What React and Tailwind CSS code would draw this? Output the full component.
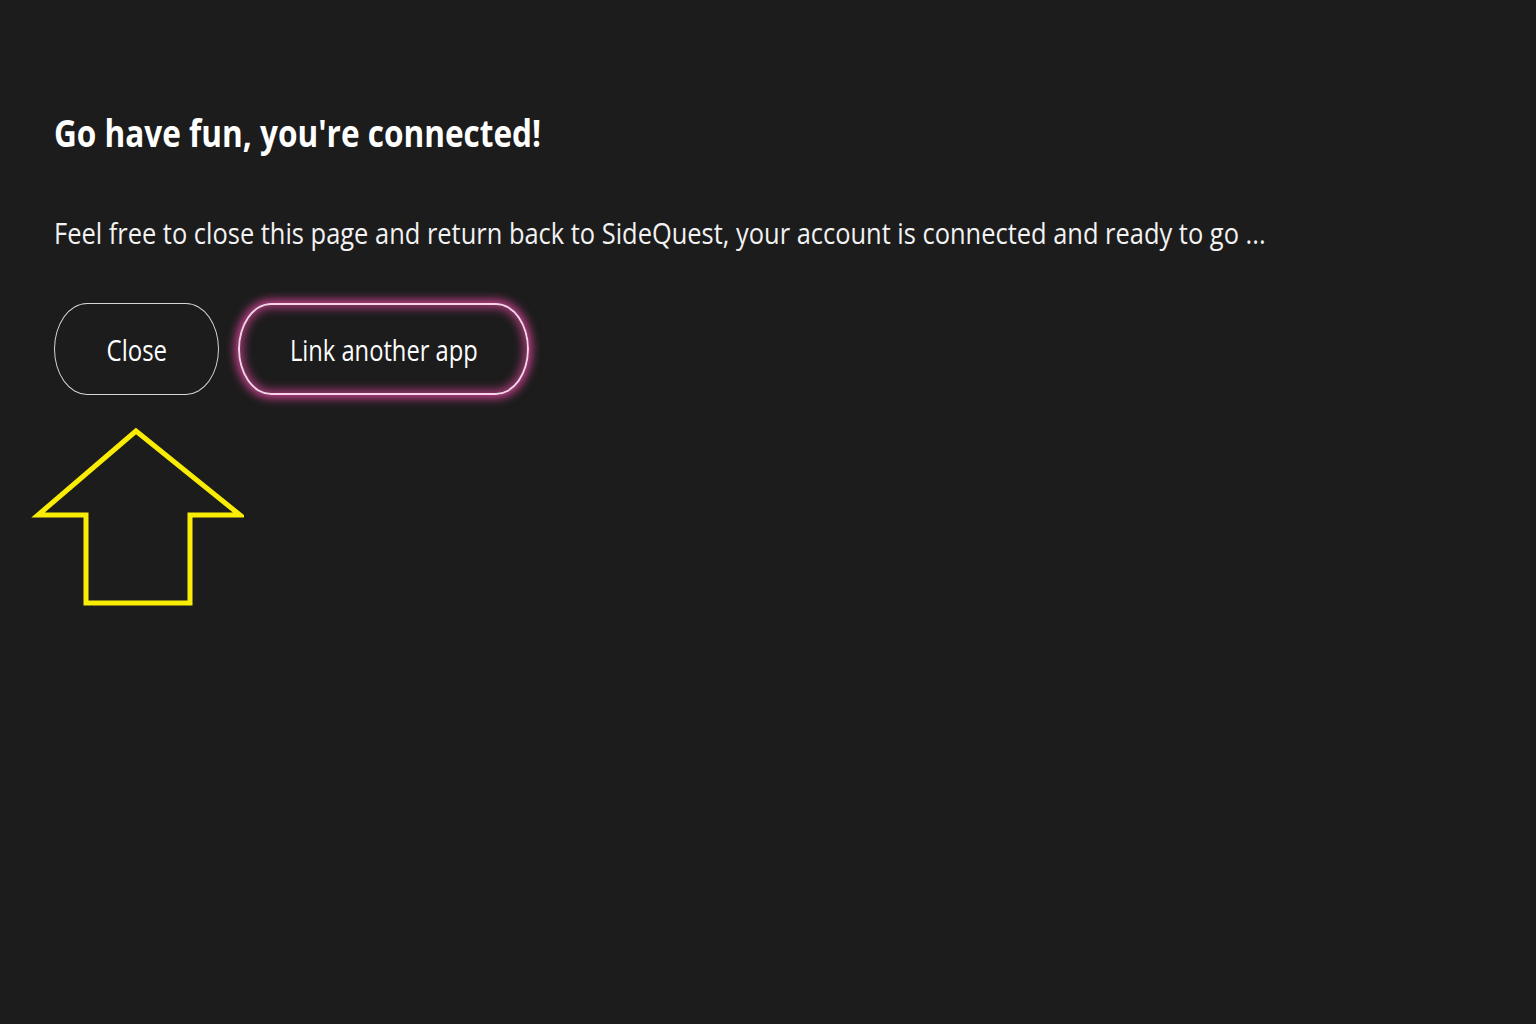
export default function App() {
  const font = { fontFamily: '"Open Sans", "Noto Sans", sans-serif' };
  return (
    <div className="min-h-[1024px] w-full bg-[#1c1c1c] text-white" style={font}>
      <div className="flex flex-col items-start pl-[54px] pt-[104px]">
        <h1 className="text-[38px] font-bold leading-[56px] whitespace-nowrap">
          <span className="inline-block origin-left scale-x-[0.83]">Go have fun, you're connected!</span>
        </h1>
        <p className="mt-[51px] text-[30px] leading-[44px] whitespace-nowrap text-[#f2f2f2]">
          <span className="inline-block origin-left scale-x-[0.848]">
            Feel free to close this page and return back to SideQuest, your account is connected and ready to go ...
          </span>
        </p>
        <div className="mt-[48px] flex gap-[19px]">
          <button className="flex h-[92px] w-[165px] items-center justify-center rounded-[33px/46px] border-[1.5px] border-[#d6d6d6] text-[30px] whitespace-nowrap">
            <span className="inline-block scale-x-[0.8]">Close</span>
          </button>
          <button className="flex h-[92px] w-[291px] items-center justify-center rounded-[33px/46px] border-[2px] border-[#f6d3e8] text-[30px] whitespace-nowrap shadow-[0_0_10px_3px_rgba(220,70,155,0.9),inset_0_0_10px_3px_rgba(220,70,155,0.7)]">
            <span className="inline-block scale-x-[0.79]">Link another app</span>
          </button>
        </div>
        <svg className="-ml-[24px] mt-[32px]" width="214" height="180" viewBox="0 0 214 180" fill="none">
          <path d="M106 4 L8 88 L56 88 L56 176 L160 176 L160 88 L210 88 Z" stroke="#f9ec05" strokeWidth="5" strokeLinejoin="miter" />
        </svg>
      </div>
    </div>
  );
}
